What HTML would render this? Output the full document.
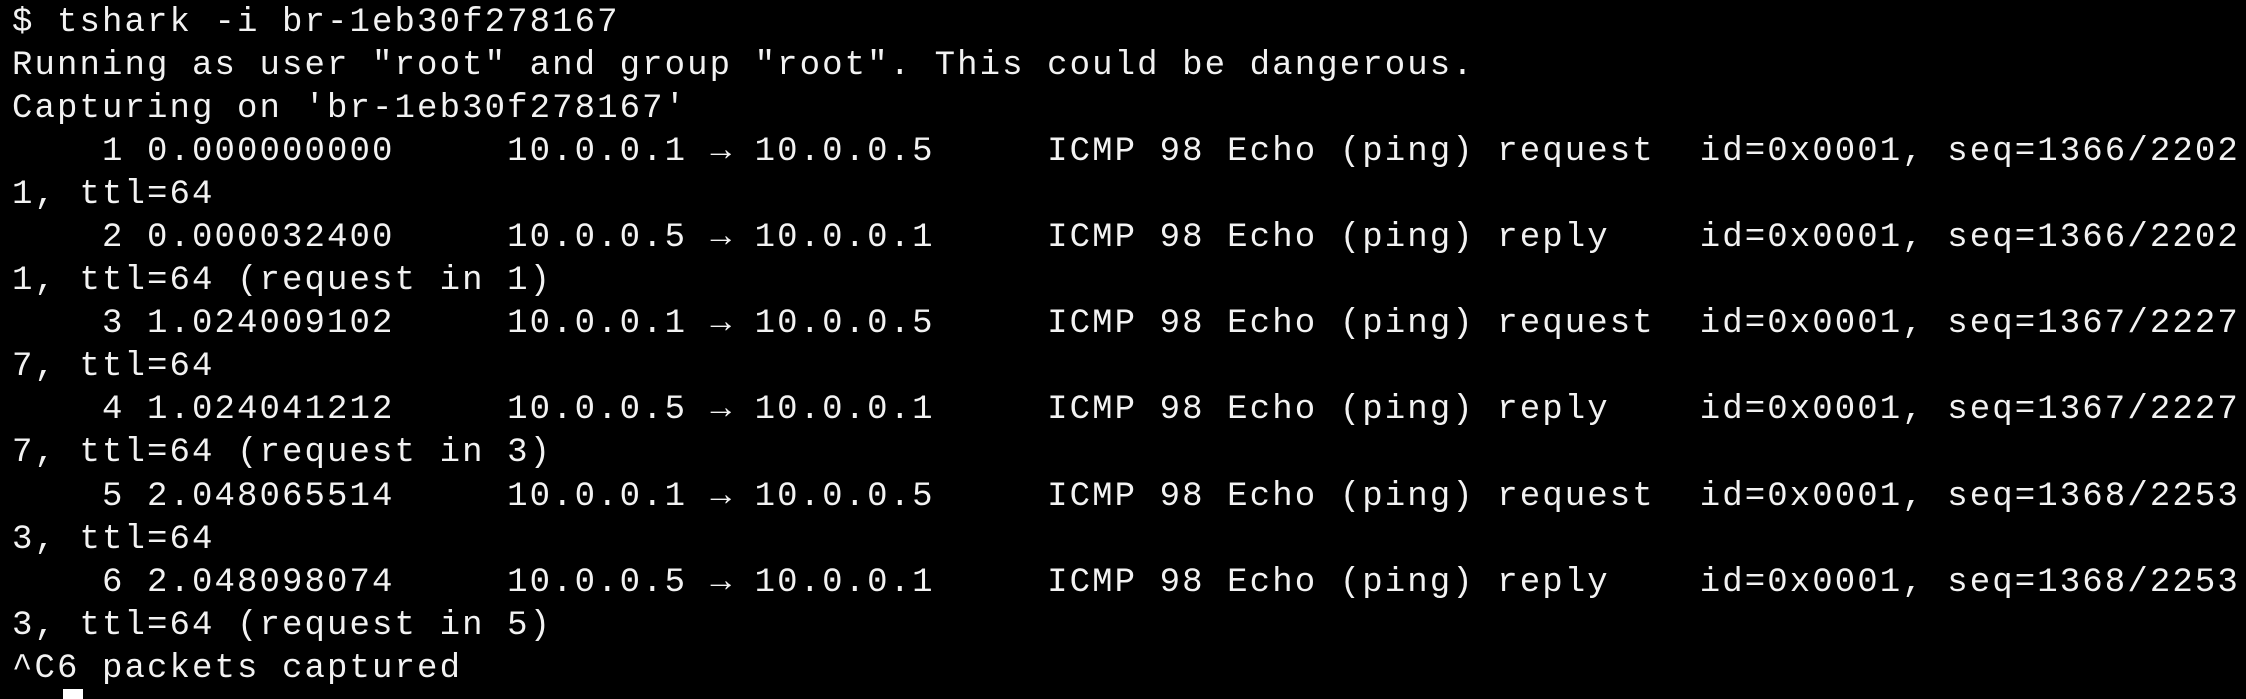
<!DOCTYPE html>
<html><head><meta charset="utf-8"><style>
html,body{margin:0;padding:0;background:#000;width:2246px;height:694px;overflow:hidden}
pre{margin:0;padding:1.5px 0 0 12px;font-family:"Liberation Mono","DejaVu Sans Mono",monospace;font-size:34px;letter-spacing:2.1px;line-height:43.1px;color:#f2f2f2;white-space:pre}
.a{display:inline-block;width:22.5px;text-align:center;letter-spacing:0}
.cur{position:absolute;left:63px;top:689px;width:20px;height:10px;background:#fff}
</style></head><body>
<pre>$ tshark -i br-1eb30f278167
Running as user "root" and group "root". This could be dangerous.
Capturing on 'br-1eb30f278167'
    1 0.000000000     10.0.0.1 <span class="a">→</span> 10.0.0.5     ICMP 98 Echo (ping) request  id=0x0001, seq=1366/2202
1, ttl=64
    2 0.000032400     10.0.0.5 <span class="a">→</span> 10.0.0.1     ICMP 98 Echo (ping) reply    id=0x0001, seq=1366/2202
1, ttl=64 (request in 1)
    3 1.024009102     10.0.0.1 <span class="a">→</span> 10.0.0.5     ICMP 98 Echo (ping) request  id=0x0001, seq=1367/2227
7, ttl=64
    4 1.024041212     10.0.0.5 <span class="a">→</span> 10.0.0.1     ICMP 98 Echo (ping) reply    id=0x0001, seq=1367/2227
7, ttl=64 (request in 3)
    5 2.048065514     10.0.0.1 <span class="a">→</span> 10.0.0.5     ICMP 98 Echo (ping) request  id=0x0001, seq=1368/2253
3, ttl=64
    6 2.048098074     10.0.0.5 <span class="a">→</span> 10.0.0.1     ICMP 98 Echo (ping) reply    id=0x0001, seq=1368/2253
3, ttl=64 (request in 5)
^C6 packets captured</pre>
<div class="cur"></div>
</body></html>
